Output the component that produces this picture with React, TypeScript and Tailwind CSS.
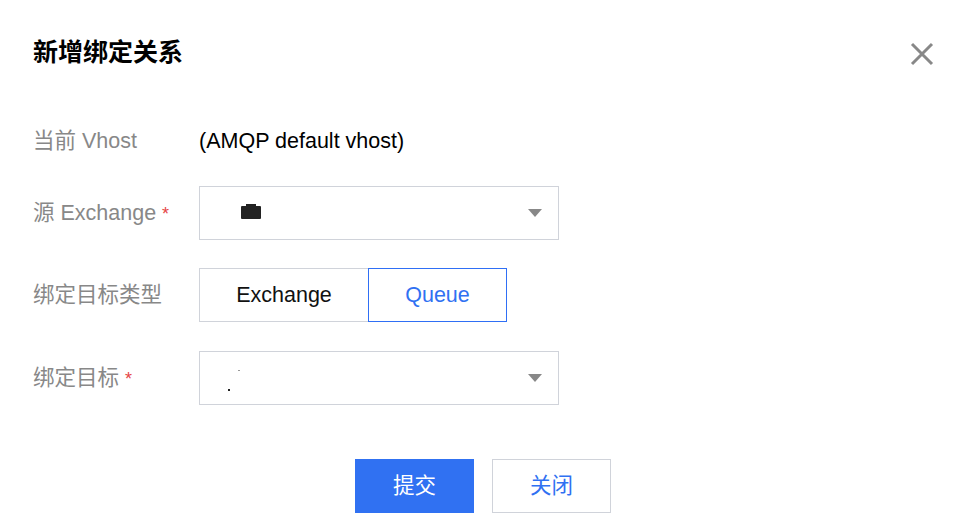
import React from "react";

const font = { fontFamily: '"Liberation Sans", "Noto Sans CJK SC", sans-serif' };

function Arrow() {
  return (
    <svg width="16" height="10" viewBox="0 0 16 10" className="absolute right-[15px] top-1/2 -translate-y-1/2">
      <path d="M1 1 L15 1 L8 9 Z" fill="#888888" />
    </svg>
  );
}

function Label({ children, required }: { children: React.ReactNode; required?: boolean }) {
  return (
    <div className="w-[166px] shrink-0 text-[21.5px] text-[#888888] flex items-center">
      <span>{children}</span>
      {required && <span className="text-[#e54545] text-[18px] ml-[6px] mt-[2px]">*</span>}
    </div>
  );
}

export default function App() {
  return (
    <div className="w-[964px] h-[530px] bg-white relative" style={font}>
      <div className="flex items-center justify-between pl-[33px] pr-[30px] pt-[36px]">
        <div className="text-[25px] font-bold text-black leading-[32px]">新增绑定关系</div>
        <svg width="24" height="24" viewBox="0 0 24 24" className="mt-[4px]">
          <path d="M2 2 L22 22 M22 2 L2 22" stroke="#888888" strokeWidth="3" />
        </svg>
      </div>

      <div className="pl-[33px] mt-[58px] flex flex-col">
        <div className="flex items-center h-[30px]">
          <Label>当前 Vhost</Label>
          <div className="text-[21.5px] text-black">(AMQP default vhost)</div>
        </div>

        <div className="flex items-center mt-[30px]">
          <Label required>源 Exchange</Label>
          <div className="relative w-[360px] h-[54px] border border-[#d0d3da] bg-white">
            <div className="absolute left-[41px] top-[19px] w-[20px] h-[13px] bg-[#222222] rounded-[1px]" />
            <div className="absolute left-[46px] top-[17px] w-[10px] h-[3px] bg-[#222222]" />
            <Arrow />
          </div>
        </div>

        <div className="flex items-center mt-[28px]">
          <Label>绑定目标类型</Label>
          <div className="flex h-[54px]">
            <div className="w-[169px] h-full border border-[#d0d3da] border-r-0 flex items-center justify-center text-[21.5px] text-[#111111]">
              Exchange
            </div>
            <div className="w-[139px] h-full border-[1.5px] border-[#2f6ff5] flex items-center justify-center text-[21.5px] text-[#3071f2]">
              Queue
            </div>
          </div>
        </div>

        <div className="flex items-center mt-[29px]">
          <Label required>绑定目标</Label>
          <div className="relative w-[360px] h-[54px] border border-[#d0d3da] bg-white">
            <div className="absolute left-[38px] top-[18px] w-[2px] h-[1px] bg-[#999999]" />
            <div className="absolute left-[28px] top-[37px] w-[2px] h-[2px] bg-[#222222]" />
            <Arrow />
          </div>
        </div>
      </div>

      <div className="flex justify-center gap-[18px] mt-[54px] pl-[2px]">
        <button className="w-[119px] h-[54px] bg-[#3071f2] text-white text-[21.5px]">提交</button>
        <button className="w-[119px] h-[54px] border border-[#d0d3da] bg-white text-[#3071f2] text-[21.5px]">关闭</button>
      </div>
    </div>
  );
}
